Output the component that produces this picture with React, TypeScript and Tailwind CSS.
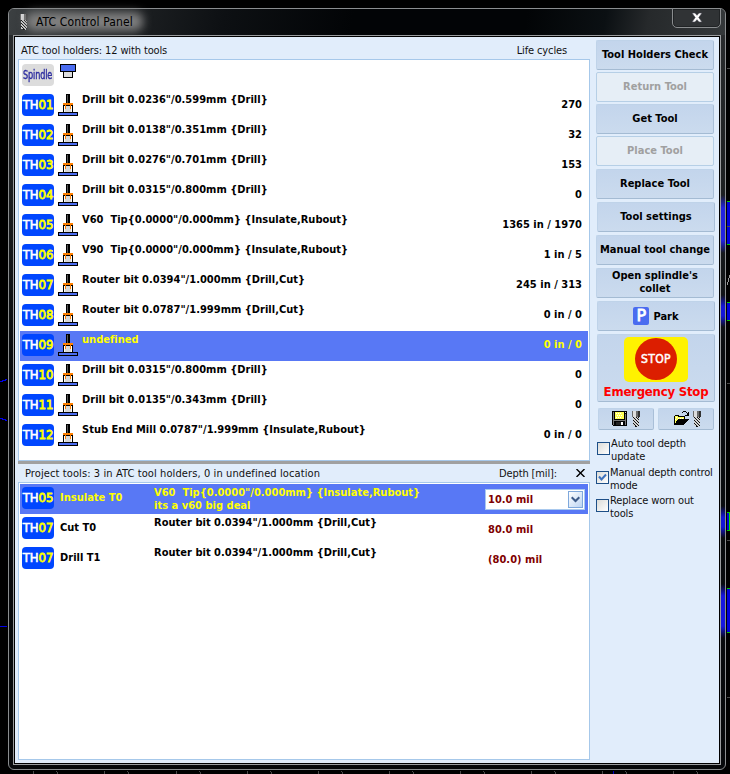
import React from "react";

type Holder = { id: string; name: string; cycles: string; selected?: boolean };

const holders: Holder[] = [
  { id: "01", name: 'Drill bit 0.0236"/0.599mm {Drill}', cycles: "270" },
  { id: "02", name: 'Drill bit 0.0138"/0.351mm {Drill}', cycles: "32" },
  { id: "03", name: 'Drill bit 0.0276"/0.701mm {Drill}', cycles: "153" },
  { id: "04", name: 'Drill bit 0.0315"/0.800mm {Drill}', cycles: "0" },
  { id: "05", name: 'V60  Tip{0.0000"/0.000mm} {Insulate,Rubout}', cycles: "1365 in / 1970" },
  { id: "06", name: 'V90  Tip{0.0000"/0.000mm} {Insulate,Rubout}', cycles: "1 in / 5" },
  { id: "07", name: 'Router bit 0.0394"/1.000mm {Drill,Cut}', cycles: "245 in / 313" },
  { id: "08", name: 'Router bit 0.0787"/1.999mm {Drill,Cut}', cycles: "0 in / 0" },
  { id: "09", name: "undefined", cycles: "0 in / 0", selected: true },
  { id: "10", name: 'Drill bit 0.0315"/0.800mm {Drill}', cycles: "0" },
  { id: "11", name: 'Drill bit 0.0135"/0.343mm {Drill}', cycles: "0" },
  { id: "12", name: 'Stub End Mill 0.0787"/1.999mm {Insulate,Rubout}', cycles: "0 in / 0" },
];

const projectTools = [
  { id: "05", name: "Insulate T0", desc: 'V60  Tip{0.0000"/0.000mm} {Insulate,Rubout}\nits a v60 big deal', depth: "10.0 mil", selected: true },
  { id: "07", name: "Cut T0", desc: 'Router bit 0.0394"/1.000mm {Drill,Cut}', depth: "80.0 mil" },
  { id: "07", name: "Drill T1", desc: 'Router bit 0.0394"/1.000mm {Drill,Cut}', depth: "(80.0) mil" },
];

const BOLD = "text-[11px] leading-[13px] font-bold tracking-[0.02px] whitespace-pre";

function Badge({ id }: { id: string }) {
  return (
    <div className="mt-[3px] flex h-[22px] w-8 shrink-0 items-center justify-center rounded-[4px] bg-[#0046ff] pb-px text-[13px] leading-none tracking-[-0.05px] text-white [-webkit-text-stroke:0.6px_white]">
      TH<span className="text-[#ffff00] [-webkit-text-stroke:0.8px_#ffff00]">{id}</span>
    </div>
  );
}

function HolderIcon() {
  return (
    <svg width="20" height="22" viewBox="0 0 20 22" shapeRendering="crispEdges" className="mt-[3px] ml-1 shrink-0">
      <path d="M8 0h4v9H8z" fill="#000" />
      <path d="M9 1h1v8H9z" fill="#555" />
      <path d="M5 11h10v7H5z" fill="#000" />
      <path d="M6 12h8v6H6z" fill="#fff" />
      <path d="M7 12h6v6H7z" fill="#d8d8d8" />
      <path d="M5 9h10v2H5zM7 11h1v4H7zM12 11h1v4h-1z" fill="#ff8000" />
      <path d="M0 18h20v4H0z" fill="#000" />
      <path d="M1 19h18v2H1z" fill="#4a6cf0" />
    </svg>
  );
}

function SpindleIcon() {
  return (
    <svg width="16" height="14" viewBox="0 0 16 14" shapeRendering="crispEdges" className="mt-[3px] ml-1.5">
      <path d="M0 0h16v8H0zM3 7h10v7H3z" fill="#000" />
      <path d="M1 1h14v6H1z" fill="#4a6cf0" />
      <path d="M4 8h8v5H4z" fill="#ddd" />
    </svg>
  );
}

function Btn({ children, disabled, className = "" }: { children?: React.ReactNode; disabled?: boolean; className?: string }) {
  return (
    <button
      className={`flex shrink-0 items-center justify-center rounded-[2px] border pb-[2px] ${BOLD} ${
        disabled
          ? "border-[#b6cfe6] bg-[#e6eef6] text-[#a0a0a0]"
          : "border-[#bfd3e9] border-r-[#a9bfd8] border-b-[#a4bbd3] bg-linear-to-b from-[#c3d5ec] to-[#cbdbee] text-black"
      } ${className}`}
    >
      {children}
    </button>
  );
}

function Bit() {
  return (
    <svg width="8" height="16" viewBox="0 0 8 16" shapeRendering="crispEdges" className="shrink-0">
      <path d="M0 0h8v6H0z" fill="#6c6c6c" />
      <path d="M1 0h3v6H1z" fill="#ddd" />
      <path d="M6 0h2v6H6z" fill="#333" />
      <path d="M1 6h6v9H6v1H3v-1H1z" fill="#d4d4d4" />
      <path
        d="M1 6h1v1h1v1h1v1h1v1h1v1h1v1H6v-1H5v-1H4V9H3V8H2V7H1zM4 6h1v1h1v1h1v1H6V8H5V7H4zM1 9h1v1h1v1h1v1h1v1h1v1h1v1H6v-1H5v-1H4v-1H3v-1H2v-1H1zM1 12h1v1h1v1h1v1h1v1H3v-2H2v-1H1zM6 6h1v1H6z"
        fill="#111"
      />
    </svg>
  );
}

function Floppy() {
  return (
    <svg width="15" height="15" viewBox="0 0 15 15" shapeRendering="crispEdges">
      <path d="M0 0h15v15H1v-1H0z" fill="#000" />
      <path d="M1 1h1v13H1zM13 3h1v11h-1zM2 9h11v1H2z" fill="#777" />
      <path d="M3 1h9v7H3z" fill="#ffff55" />
      <path d="M4 2h1v1H4zM6 2h1v1H6zM8 2h1v1H8zM5 4h1v1H5zM7 4h1v1H7zM9 4h1v1H9zM4 6h1v1H4zM6 6h1v1H6zM8 6h1v1H8z" fill="#fff" />
      <path d="M9 11h2v3H9z" fill="#fff" />
      <path d="M4 11h5v3H4z" fill="#222" />
      <path d="M13 1h1v1h-1z" fill="#ddd" />
    </svg>
  );
}

function Folder() {
  return (
    <svg width="15" height="14" viewBox="0 0 15 14" shapeRendering="crispEdges">
      <path d="M0 5h1V4h4v1h6v3h4v1h-1v1h-1v1h-1v1h-1v1h-1v1H0z" fill="#000" />
      <path d="M1 5h3v1h6v2H4v1H3v1H2v2H1z" fill="#ffff55" />
      <path d="M2 6h1v1H2zM4 7h1v1H4zM6 7h1v1H6zM8 7h1v1H8zM1 8h1v1H1z" fill="#fff" />
      <path d="M8 1h1V0h3v1h1v1h1V1h1v4h-4V4h2V2h-1V1H9v1H8z" fill="#000" />
    </svg>
  );
}

function Check({ on, className = "", children }: { on?: boolean; className?: string; children: React.ReactNode }) {
  return (
    <label className={`flex h-[26px] shrink-0 ${className}`}>
      <span className="mt-[5px] flex size-[13px] shrink-0 items-center justify-center border border-[#1d4f87] bg-linear-to-br from-[#dcdcd8] to-white">
        {on && (
          <svg width="9" height="9" viewBox="0 0 9 9" fill="none" stroke="#3e72bd" strokeWidth="2">
            <path d="M1 3.5 3.5 6.5 8 1.5" />
          </svg>
        )}
      </span>
      <span className="ml-px whitespace-pre">{children}</span>
    </label>
  );
}

const tickXs = [33, 104, 176, 247, 318, 389, 460, 531, 602, 673];
const blocks = [
  [201, 44],
  [302, 19],
  [512, 19],
  [588, 45],
];

/* Board drawing visible around the window edges. */
function Backdrop() {
  return (
    <svg width="730" height="774" className="absolute inset-0" shapeRendering="crispEdges">
      <path d="M0 381h2v-1h3v-1h2M0 418h2v1h3v1h2M0 626h7" stroke="#0000e6" fill="none" transform="translate(0 .5)" />
      {blocks.map(([y, h]) => (
        <g key={y}>
          <path d={`M727 ${y}h3v${h}h-3z`} fill="#0000d8" />
          <path d={`M727 ${y}h3v1h-3zM727 ${y + h - 1}h3v1h-3z`} fill="#00c800" />
        </g>
      ))}
      <path d="M729 513h1v17h-1z" fill="#00e600" />
      {[68, 226, 383, 540, 697].map((y) => (
        <path key={y} d={`M727 ${y}h3v1h-3z`} fill="#4a4a4a" />
      ))}
      <path d="M727 282h1v3h-1zM728 278h1v4h-1zM729 275h1v3h-1z" fill="#999" />
      {tickXs.map((x) => (
        <path key={x} d={`M${x} 771h1v3h-1zM${x + 23} 771h1v1h-1zM${x + 24} 772h1v2h-1z`} fill="#4a4a4a" />
      ))}
      <path d="M613 771h1v3h-1z" fill="#0000c0" />
    </svg>
  );
}

export default function App() {
  return (
    <div className="relative h-[774px] w-[730px] overflow-hidden bg-black pt-2 pl-2 font-['DejaVu_Sans_Condensed','DejaVu_Sans',sans-serif] text-[11px] leading-[13px] tracking-[-0.13px] text-[#111] [font-stretch:condensed]">
      <Backdrop />
      <div className="relative flex h-[762px] w-[718px] flex-col rounded-[6px] border border-[#8a8d8f] bg-[linear-gradient(180deg,#2a2d2f_0,#1c1f21_25%,#0a0d10_45%,#07090b_100%)] px-1">
        {/* frame reflections of the coloured traces behind the glass */}
        <div className="absolute top-[186px] right-0 h-[58px] w-1 bg-[linear-gradient(180deg,transparent,#2222e0_22%,#2222e0_78%,transparent)]" />
        <div className="absolute top-[286px] right-0 h-8 w-1 bg-[linear-gradient(180deg,transparent,#1414d8_35%,#1414d8_65%,transparent)]" />
        <div className="absolute top-[497px] right-0 h-8 w-1 bg-[linear-gradient(180deg,transparent,#1414d8_35%,#1414d8_65%,transparent)]" />
        <div className="absolute top-[575px] right-0 h-[54px] w-1 bg-[linear-gradient(180deg,transparent,#1616e0_22%,#1616e0_78%,transparent)]" />
        <div className="-mx-1 flex h-[26px] shrink-0 justify-between rounded-t-[5px] bg-[linear-gradient(100deg,#3c4042_0,#26292b_10%,#0d1013_30%,#020406_48%,#020406_72%,#0b1013_83%,#26292b_89%,#34383a_100%)] pl-[11px]">
          <div className="flex pt-[5px]">
            <Bit />
            <div className="relative ml-2 h-[15px]">
              <div className="absolute -inset-x-2.5 -inset-y-0.5 rounded-lg bg-[#808080] blur-[5px]" />
              <span className="relative top-px block text-[12px] leading-[15px] tracking-[0.12px] text-black">ATC Control Panel</span>
            </div>
          </div>
          <button className="-mt-px mr-1 flex h-5 w-[49px] items-center justify-center rounded-b-[5px] border border-[#8a8d8f] bg-[#303335] shadow-[inset_0_0_0_1px_#202325]">
            <svg width="12" height="11" viewBox="0 0 12 11" className="-mt-[2px]">
              <path d="M1 1h3l2 2.3L8 1h3L7.8 5.5 11 10H8L6 7.7 4 10H1l3.2-4.5z" fill="#fff" stroke="#44454f" strokeWidth=".6" />
            </svg>
          </button>
        </div>
        <div className="h-[730px] w-[708px] shrink-0 border border-[#9a9c9e] bg-black p-px">
          <div className="flex h-[726px] w-[704px] bg-[#e1edfb]">
            <div className="w-[581px] shrink-0 pl-[3px]">
              <div className="flex h-[22px] pt-[7px] pl-[3px]">
                <span>ATC tool holders: 12 with tools</span>
                <span className="mr-[29px] ml-auto">Life cycles</span>
              </div>
              <div className="h-[402px] w-[572px] border border-[#a6c8ea] bg-white p-px">
                <div className="flex h-[30px] pl-[2px]">
                  <div className="mt-[3px] flex h-[22px] w-8 items-center justify-center rounded-[4px] bg-[#dcdcdc]">
                    <span className="block scale-x-[0.75] text-[12px] leading-none text-[#2c2ca0] [-webkit-text-stroke:0.4px_#2c2ca0]">Spindle</span>
                  </div>
                  <SpindleIcon />
                </div>
                {holders.map((h) => (
                  <div key={h.id} className={`flex h-[30px] pr-[6px] pl-[2px] ${h.selected ? "bg-[#5878f5] text-[#ffff00]" : "text-black"}`}>
                    <Badge id={h.id} />
                    <HolderIcon />
                    <span className={`mt-[2px] ml-1 ${BOLD}`}>{h.name}</span>
                    <span className={`mt-[7px] ml-auto ${BOLD}`}>{h.cycles}</span>
                  </div>
                ))}
              </div>
              <div className="h-[3px] w-[572px] bg-[#a0a0a0]" />
              <div className="flex h-[18px] w-[572px] pt-[3px] pl-[7px]">
                <span className="tracking-[0.1px]">Project tools: 3 in ATC tool holders, 0 in undefined location</span>
                <span className="ml-auto">Depth [mil]:</span>
                <svg width="9" height="8" viewBox="0 0 9 8" className="mt-[2px] mr-[5px] ml-[19px]" stroke="#000" strokeWidth="1.4">
                  <path d="M.5 0l8 8M8.5 0l-8 8" />
                </svg>
              </div>
              <div className="h-[278px] w-[572px] border border-[#a6c8ea] bg-white p-px">
                {projectTools.map((t) => (
                  <div key={t.name} className={`flex h-[30px] pl-[2px] ${t.selected ? "bg-[#5878f5] text-[#ffff00]" : "text-black"}`}>
                    <Badge id={t.id} />
                    <span className={`mt-[7px] ml-1.5 w-[94px] shrink-0 ${BOLD}`}>{t.name}</span>
                    <span className={`mt-[2px] w-[331px] shrink-0 ${BOLD}`}>{t.desc}</span>
                    {t.selected ? (
                      <div className="mt-[5px] flex h-[21px] w-[100px] justify-between border border-[#a9c9ee] bg-white pt-px pr-px pl-[2px]">
                        <span className={`mt-[2px] text-[#800000] ${BOLD}`}>{t.depth}</span>
                        <div className="flex h-[17px] w-[15px] items-center justify-center border border-[#7fa8dc] bg-linear-to-br from-white to-[#bcd4f2]">
                          <svg width="9" height="7" viewBox="0 0 9 7" fill="none" stroke="#3d5a88" strokeWidth="2">
                            <path d="M.7 1.2 4.5 5 8.3 1.2" />
                          </svg>
                        </div>
                      </div>
                    ) : (
                      <span className={`mt-[9px] ml-[3px] text-[#800000] ${BOLD}`}>{t.depth}</span>
                    )}
                  </div>
                ))}
              </div>
            </div>
            <div className="flex w-[120px] flex-col pt-[3px]">
              <Btn className="h-[30px] w-[118px]">Tool Holders Check</Btn>
              <Btn disabled className="mt-[2px] h-[30px] w-[118px]">Return Tool</Btn>
              <Btn className="mt-[2px] h-[30px] w-[118px]">Get Tool</Btn>
              <Btn disabled className="mt-[2px] h-[30px] w-[118px]">Place Tool</Btn>
              <Btn className="mt-[3px] h-[30px] w-[118px]">Replace Tool</Btn>
              <Btn className="mt-[3px] ml-px h-[30px] w-[118px]">Tool settings</Btn>
              <Btn className="mt-[3px] h-[30px] w-[118px]">Manual tool change</Btn>
              <Btn className="mt-[3px] h-[30px] w-[118px]">{"Open splindle's\ncollet"}</Btn>
              <Btn className="mt-[3px] ml-px h-[30px] w-[118px]">
                <span className="mt-px mr-1 flex h-[18px] w-4 items-center justify-center rounded-[2px] bg-[#4a6cf0] font-['DejaVu_Sans',sans-serif] text-[16px] leading-none font-normal tracking-[0px] text-white [font-stretch:normal] [-webkit-text-stroke:0.8px_white]">P</span>
                <span className="mt-[3px]">Park</span>
              </Btn>
              <Btn className="mt-[3px] ml-px h-[68px] w-[118px] flex-col">
                <span className="mt-px flex h-[45px] w-16 shrink-0 items-center justify-center rounded-[5px] bg-[#fff200]">
                  <span className="flex size-[42px] items-center justify-center rounded-full bg-[#dc1e00] text-[12px] font-normal tracking-[0.4px] text-white [-webkit-text-stroke:0.5px_white]">STOP</span>
                </span>
                <span className="mt-[2px] text-[13px] leading-[15px] tracking-[-0.2px] text-[#ff0000]">Emergency Stop</span>
              </Btn>
              <div className="mt-1.5 ml-[2px] flex gap-1">
                <Btn className="h-[22px] w-14">
                  <span className="flex gap-[5px] pt-px pr-px">
                    <Floppy />
                    <Bit />
                  </span>
                </Btn>
                <Btn className="h-[22px] w-14">
                  <span className="flex gap-1 pt-px pl-[3px]">
                    <Folder />
                    <Bit />
                  </span>
                </Btn>
              </div>
              <Check className="mt-[7px] ml-px">{"Auto tool depth\nupdate"}</Check>
              <Check on className="mt-[3px]">{"Manual depth control\nmode"}</Check>
              <Check className="mt-[2px]">{"Replace worn out\ntools"}</Check>
            </div>
          </div>
        </div>
      </div>
    </div>
  );
}
